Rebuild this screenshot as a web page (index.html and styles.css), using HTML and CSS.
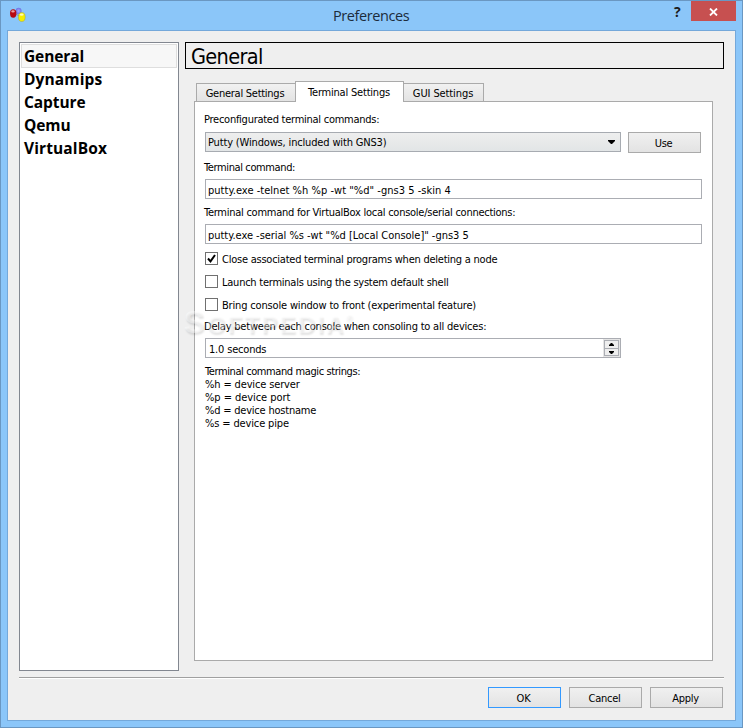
FILE: index.html
```html
<!DOCTYPE html>
<html lang="en">
<head>
<meta charset="utf-8">
<title>Preferences</title>
<link rel="stylesheet" href="styles.css">
</head>
<body>
<div class="window">
  <header class="titlebar">
    <svg class="app-icon" width="18" height="18" viewBox="0 0 18 18">
      <defs>
        <radialGradient id="b"><stop offset="0" stop-color="#a9adff"/><stop offset="1" stop-color="#6b70e4"/></radialGradient>
      </defs>
      <path d="M4 6 9 4 13 10z" fill="none" stroke="#8a8fa0" stroke-width="1"/>
      <ellipse cx="9.600" cy="4" rx="2.900" ry="3.300" fill="url(#b)"/>
      <ellipse cx="4.200" cy="6.500" rx="3.200" ry="4.200" fill="#b80812"/>
      <ellipse cx="12.800" cy="10" rx="3.400" ry="4.500" fill="#f4ee00" stroke="#a5a240" stroke-width=".5"/>
      <ellipse cx="4" cy="4.400" rx="1.800" ry="1.100" fill="#e9a0a5"/>
      <ellipse cx="12.600" cy="7.600" rx="2" ry="1.200" fill="#fffbb5"/>
    </svg>
    <h1 class="title">Preferences</h1>
    <span class="help">?</span>
    <button class="close" aria-label="Close"><svg width="9" height="8" viewBox="0 0 9 8"><path d="M1 .5 8 7.500M8 .5 1 7.500" stroke="#fff" stroke-width="1.800"/></svg></button>
  </header>
  <main class="client">
    <div class="columns">
      <ul class="categories">
        <li class="selected"><span>General</span></li>
        <li class="wide">Dynamips</li>
        <li>Capture</li>
        <li>Qemu</li>
        <li class="wide">VirtualBox</li>
      </ul>
      <section class="page">
        <h2 class="heading">General</h2>
        <nav class="tabs">
          <span class="tab tab-general">General Settings</span>
          <span class="tab tab-terminal active">Terminal Settings</span>
          <span class="tab tab-gui">GUI Settings</span>
        </nav>
        <div class="pane">
          <div class="label first">Preconfigurated terminal commands:</div>
          <div class="row">
            <div class="combo"><span>Putty (Windows, included with GNS3)</span>
              <svg width="7" height="4" viewBox="0 0 7 4"><path d="M0 0H7V1L4 4H3L0 1z"/></svg></div>
            <button class="button use">Use</button>
          </div>
          <div class="label second">Terminal command:</div>
          <div class="field telnet">putty.exe -telnet %h %p -wt "%d" -gns3 5 -skin 4</div>
          <div class="label third">Terminal command for VirtualBox local console/serial connections:</div>
          <div class="field serial">putty.exe -serial %s -wt "%d [Local Console]" -gns3 5</div>
          <div class="checks">
            <div class="check"><span class="box"><svg width="11" height="11" viewBox="0 0 11 11"><path d="M2 5.500 4.500 8.300 9 2" fill="none" stroke="#000" stroke-width="2"/></svg></span><span>Close associated terminal programs when deleting a node</span></div>
            <div class="check"><span class="box"></span><span>Launch terminals using the system default shell</span></div>
            <div class="check front"><span class="box"></span><span>Bring console window to front (experimental feature)</span></div>
          </div>
          <div class="label delay">Delay between each console when consoling to all devices:</div>
          <div class="spin"><span>1.0 seconds</span>
            <span class="arrows">
              <i><svg width="5" height="3" viewBox="0 0 5 3"><path d="M2 0H3L5 2V3H0V2z"/></svg></i>
              <i><svg width="5" height="3" viewBox="0 0 5 3"><path d="M0 0H5V1L3 3H2L0 1z"/></svg></i>
            </span></div>
          <div class="magic">
            <div class="magic-title">Terminal command magic strings:</div>
            <div>%h = device server</div>
            <div class="port">%p = device port</div>
            <div class="host">%d = device hostname</div>
            <div>%s = device pipe</div>
          </div>
        </div>
      </section>
    </div>
    <footer class="footer">
      <button class="button default">OK</button>
      <button class="button">Cancel</button>
      <button class="button">Apply</button>
    </footer>
  </main>
  <div class="watermark">S<small>OFTPEDIA</small><sup>®</sup></div>
</div>
</body>
</html>
```
FILE: styles.css
```css
* { box-sizing: border-box; }
body {
  margin: 0;
  font: 11px/13px "DejaVu Sans Condensed", "DejaVu Sans", sans-serif;
  font-stretch: condensed;
  letter-spacing: -0.26px;
  color: #000;
}
h1, h2, ul { margin: 0; padding: 0; font-weight: normal; list-style: none; }
svg { display: block; flex: none; }
.window {
  position: relative;
  width: 743px;
  height: 728px;
  padding: 0 6px 7px;
  border: 1px solid #6a97c2;
  background: #8bc6f9;
}
.titlebar { display: flex; height: 29px; }
.app-icon { margin: 6px 0 0 2px; }
.title {
  flex: 1;
  padding: 3px 0 0 306px;
  font: 14.5px/23px "Open Sans", sans-serif;
  letter-spacing: -0.4px;
  color: #1c2c3c;
}
.help { width: 17px; font: bold 14px/21px "Open Sans", sans-serif; color: #1c1c1c; }
.close {
  display: flex;
  justify-content: center;
  align-items: center;
  width: 45px;
  height: 20px;
  padding: 2px 0 0;
  border: 0;
  background: #c75050;
}
.client {
  height: 691px;
  padding: 11px 11px 0;
  border: 1px solid #74a8da;
  background: #efefef;
}
.columns { display: flex; gap: 6px; height: 629px; }
.categories {
  width: 160px;
  padding: 1px;
  border: 1px solid #828790;
  background: #fff;
}
.categories li {
  height: 23px;
  padding-left: 3px;
  font: bold 15.5px/25px "Open Sans", sans-serif;
  letter-spacing: -0.1px;
}
.categories .wide { letter-spacing: 0.12px; }
.categories .selected {
  height: 24px;
  padding-left: 2px;
  border: 1px solid #dedede;
  background: #f7f7f7;
  line-height: 23px;
}
.categories .selected + li { margin-top: -1px; }
.page { display: flex; flex-direction: column; width: 539px; }
.heading {
  height: 27px;
  padding-left: 5px;
  border: 1px solid #000;
  font: 21.5px/27px "DejaVu Sans Condensed", "DejaVu Sans", sans-serif;
  font-stretch: condensed;
  letter-spacing: -0.65px;
}
.tabs { display: flex; align-items: flex-end; height: 33px; margin: 0 0 -1px 11px; padding-top: 12px; z-index: 1; }
.tab {
  height: 18px;
  padding-right: 1px;
  border: 1px solid #aaa;
  border-bottom: 0;
  background: linear-gradient(#f1f1f1, #e3e3e3);
  line-height: 19px;
  text-align: center;
  margin-bottom: 1px;
}
.tab-general { width: 100px; padding-right: 2px; }
.tab-terminal { width: 109px; margin-left: -1px; letter-spacing: -0.2px; }
.tab-gui { width: 81px; margin-left: -1px; letter-spacing: -0.1px; }
.tab.active { z-index: 1; height: 21px; margin-bottom: 0; background: #fff; line-height: 21px; }
.pane {
  width: 519px;
  height: 560px;
  margin-left: 9px;
  padding: 11px 10px 0;
  border: 1px solid #aaa;
  background: #fff;
}
.label { height: 13px; margin-left: -1px; }
.row { display: flex; gap: 7px; height: 21px; margin-top: 6px; }
.combo {
  display: flex;
  align-items: center;
  justify-content: space-between;
  width: 416px;
  height: 20px;
  padding: 0 5px 0 2px;
  border: 1px solid #a7abb1;
  background: linear-gradient(#eee, #e2e5e6);
  letter-spacing: -0.16px;
}
.button {
  width: 73px;
  height: 21px;
  padding: 1px 2px 0 0;
  border: 1px solid #aaa;
  background: linear-gradient(#f0f0f0, #e3e3e3);
  font: inherit;
  letter-spacing: inherit;
  color: inherit;
  text-align: center;
}
.label.second { margin-top: 8px; letter-spacing: -0.38px; }
.field {
  width: 497px;
  height: 20px;
  margin-top: 5px;
  padding: 1px 0 0 2px;
  border: 1px solid #abadb3;
  line-height: 19px;
}
.field.telnet { letter-spacing: 0.03px; }
.field.serial { letter-spacing: -0.03px; }
.label.third { margin-top: 7px; }
.checks { margin-top: 8px; }
.check { display: flex; gap: 4px; height: 23px; line-height: 15px; letter-spacing: -0.24px; }
.check.front { letter-spacing: -0.17px; }
.box { width: 13px; height: 13px; border: 1px solid #707070; background: #fff; }
.label.delay { margin-top: -1px; letter-spacing: -0.21px; }
.spin {
  display: flex;
  justify-content: space-between;
  width: 416px;
  height: 20px;
  margin-top: 5px;
  padding: 1px 1px 1px 3px;
  border: 1px solid #abadb3;
  line-height: 19px;
  letter-spacing: -0.18px;
}
.arrows { width: 15px; height: 16px; border: 1px solid #abadb3; background: #eee; outline: 1px solid #e5e5e5; }
.arrows i { display: flex; height: 7px; align-items: center; justify-content: center; }
.arrows i + i { border-top: 1px solid #abadb3; }
.magic { margin-top: 7px; letter-spacing: -0.14px; }
.magic-title { letter-spacing: -0.4px; }
.magic .port { letter-spacing: -0.06px; }
.magic .host { letter-spacing: -0.21px; }
.footer {
  display: flex;
  justify-content: flex-end;
  gap: 8px;
  width: 705px;
  margin-top: 6px;
  padding: 8px 1px 0 0;
  border-top: 1px solid #a0a0a0;
  box-shadow: inset 0 1px #fff;
}
.footer .button { margin-top: 1px; }
.button.default { border-color: #3399ff; }
.watermark {
  position: absolute;
  left: 183px;
  top: 305px;
  font: bold 31px/34px "Liberation Sans", sans-serif;
  letter-spacing: 2.2px;
  color: rgba(255, 255, 255, .4);
  text-shadow: 1px 2px 2px rgba(0, 0, 0, .11);
  pointer-events: none;
}
.watermark small { font-size: 24px; }
.watermark sup { font-size: 9px; vertical-align: 12px; line-height: 0; }
```
